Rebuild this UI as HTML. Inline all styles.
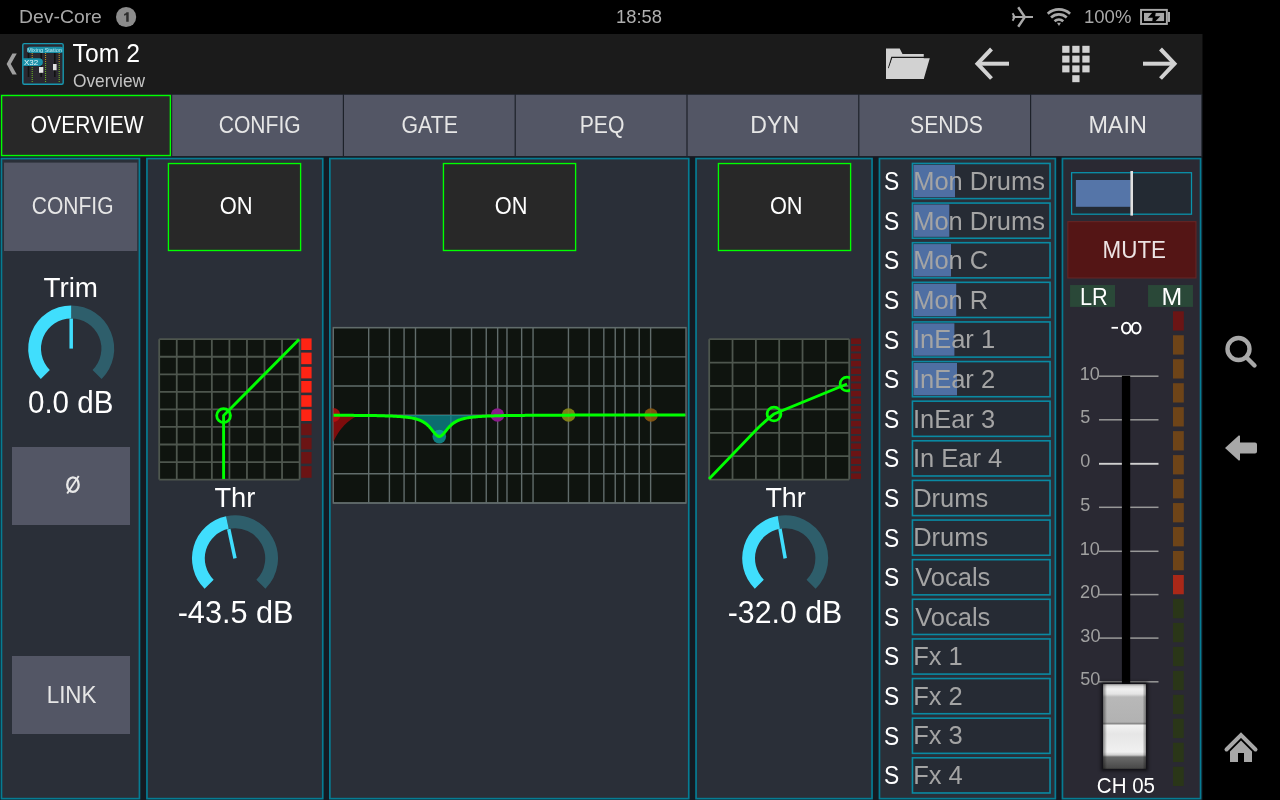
<!DOCTYPE html><html><head><meta charset="utf-8"><style>
html,body{margin:0;padding:0;background:#000;width:1280px;height:800px;overflow:hidden;font-family:"Liberation Sans",sans-serif;}
svg{position:absolute;left:0;top:0;}
</style></head><body>
<svg width="1280" height="800" viewBox="0 0 1280 800"><rect x="0.00" y="34.00" width="1202.50" height="60.00" fill="#1b1b1b" /><rect x="0.00" y="94.00" width="1202.50" height="63.00" fill="#1d2129" /><rect x="0.00" y="157.00" width="1202.50" height="643.00" fill="#141a22" /><circle cx="126.1" cy="17" r="10.1" fill="#8c8c8c"/><path fill="#2e2e2e" d="M126.2,12.3 L128.7,12.3 L128.7,21.8 L126.2,21.8 L126.2,15.0 L124.1,15.8 L124.1,14.1 L126.2,12.9 Z"/><rect x="1.60" y="95.50" width="168.77" height="60.04" fill="#282828" stroke="#00ff00" stroke-width="1.4" /><rect x="172.20" y="94.80" width="170.60" height="61.20" fill="#535665" /><rect x="344.00" y="94.80" width="170.60" height="61.20" fill="#535665" /><rect x="515.80" y="94.80" width="170.60" height="61.20" fill="#535665" /><rect x="687.60" y="94.80" width="170.60" height="61.20" fill="#535665" /><rect x="859.40" y="94.80" width="170.60" height="61.20" fill="#535665" /><rect x="1031.20" y="94.80" width="170.10" height="61.20" fill="#535665" /><rect x="1.45" y="158.55" width="138.00" height="640.10" fill="#2a2f38" stroke="#067c93" stroke-width="1.7" /><rect x="146.95" y="158.55" width="175.80" height="640.10" fill="#2a2f38" stroke="#067c93" stroke-width="1.7" /><rect x="329.85" y="158.55" width="358.90" height="640.10" fill="#2a2f38" stroke="#067c93" stroke-width="1.7" /><rect x="696.05" y="158.55" width="176.00" height="640.10" fill="#2a2f38" stroke="#067c93" stroke-width="1.7" /><rect x="879.45" y="158.55" width="175.90" height="640.10" fill="#2a2f38" stroke="#067c93" stroke-width="1.7" /><rect x="1062.45" y="158.55" width="138.10" height="640.10" fill="#2a2933" stroke="#067c93" stroke-width="1.7" /><rect x="4.00" y="162.60" width="133.20" height="88.40" fill="#535665" /><rect x="12.00" y="447.00" width="118.00" height="78.00" fill="#535665" /><ellipse cx="72.95" cy="484.65" rx="5.75" ry="7.3" fill="none" stroke="#e8e8e8" stroke-width="2.3"/><line x1="67.2" y1="493.6" x2="78.7" y2="476.1" stroke="#e8e8e8" stroke-width="1.9"/><rect x="12.00" y="656.00" width="118.00" height="78.00" fill="#535665" /><rect x="168.44" y="163.54" width="132.16" height="86.96" fill="#282828" stroke="#00ff00" stroke-width="1.36" /><rect x="443.44" y="163.54" width="132.16" height="86.96" fill="#282828" stroke="#00ff00" stroke-width="1.36" /><rect x="718.44" y="163.54" width="132.16" height="86.96" fill="#282828" stroke="#00ff00" stroke-width="1.36" /><path d="M71.20,312.00 A36.6,36.6 0 0 1 97.08,374.48" fill="none" stroke="#2e5e6b" stroke-width="12.8"/><path d="M45.32,374.48 A36.6,36.6 0 0 1 71.20,312.00" fill="none" stroke="#40defd" stroke-width="12.8"/><line x1="71.20" y1="348.60" x2="71.20" y2="318.60" stroke="#40defd" stroke-width="3.5"/><path d="M227.39,522.60 A36.6,36.6 0 0 1 260.88,584.28" fill="none" stroke="#2e5e6b" stroke-width="12.8"/><path d="M209.12,584.28 A36.6,36.6 0 0 1 227.39,522.60" fill="none" stroke="#40defd" stroke-width="12.8"/><line x1="235.00" y1="558.40" x2="228.76" y2="529.06" stroke="#40defd" stroke-width="3.5"/><path d="M778.84,522.36 A36.6,36.6 0 0 1 811.08,584.28" fill="none" stroke="#2e5e6b" stroke-width="12.8"/><path d="M759.32,584.28 A36.6,36.6 0 0 1 778.84,522.36" fill="none" stroke="#40defd" stroke-width="12.8"/><line x1="785.20" y1="558.40" x2="779.99" y2="528.86" stroke="#40defd" stroke-width="3.5"/><rect x="159.2" y="339.2" width="140.40000000000003" height="140.40000000000003" fill="#0f140f"/><line x1="159.20" y1="339.2" x2="159.20" y2="479.6" stroke="#4e564e" stroke-width="1.8"/><line x1="176.75" y1="339.2" x2="176.75" y2="479.6" stroke="#4e564e" stroke-width="1.8"/><line x1="194.30" y1="339.2" x2="194.30" y2="479.6" stroke="#4e564e" stroke-width="1.8"/><line x1="211.85" y1="339.2" x2="211.85" y2="479.6" stroke="#4e564e" stroke-width="1.8"/><line x1="229.40" y1="339.2" x2="229.40" y2="479.6" stroke="#4e564e" stroke-width="1.8"/><line x1="246.95" y1="339.2" x2="246.95" y2="479.6" stroke="#4e564e" stroke-width="1.8"/><line x1="264.50" y1="339.2" x2="264.50" y2="479.6" stroke="#4e564e" stroke-width="1.8"/><line x1="282.05" y1="339.2" x2="282.05" y2="479.6" stroke="#4e564e" stroke-width="1.8"/><line x1="299.60" y1="339.2" x2="299.60" y2="479.6" stroke="#4e564e" stroke-width="1.8"/><line x1="159.2" y1="339.20" x2="299.6" y2="339.20" stroke="#4e564e" stroke-width="1.8"/><line x1="159.2" y1="356.75" x2="299.6" y2="356.75" stroke="#4e564e" stroke-width="1.8"/><line x1="159.2" y1="374.30" x2="299.6" y2="374.30" stroke="#4e564e" stroke-width="1.8"/><line x1="159.2" y1="391.85" x2="299.6" y2="391.85" stroke="#4e564e" stroke-width="1.8"/><line x1="159.2" y1="409.40" x2="299.6" y2="409.40" stroke="#4e564e" stroke-width="1.8"/><line x1="159.2" y1="426.95" x2="299.6" y2="426.95" stroke="#4e564e" stroke-width="1.8"/><line x1="159.2" y1="444.50" x2="299.6" y2="444.50" stroke="#4e564e" stroke-width="1.8"/><line x1="159.2" y1="462.05" x2="299.6" y2="462.05" stroke="#4e564e" stroke-width="1.8"/><line x1="159.2" y1="479.60" x2="299.6" y2="479.60" stroke="#4e564e" stroke-width="1.8"/><path d="M223.6,479 L223.6,415.6 L299,339.5" fill="none" stroke="#00ff00" stroke-width="2.9"/><circle cx="223.6" cy="415.6" r="6.9" fill="none" stroke="#00ff00" stroke-width="2.8"/><rect x="301.2" y="338.40" width="10.4" height="11.6" fill="#ff2414"/><rect x="301.2" y="352.60" width="10.4" height="11.6" fill="#ff2414"/><rect x="301.2" y="366.80" width="10.4" height="11.6" fill="#ff2414"/><rect x="301.2" y="381.00" width="10.4" height="11.6" fill="#ff2414"/><rect x="301.2" y="395.20" width="10.4" height="11.6" fill="#ff2414"/><rect x="301.2" y="409.40" width="10.4" height="11.6" fill="#ff2414"/><rect x="301.2" y="423.60" width="10.4" height="11.6" fill="#6b1414"/><rect x="301.2" y="437.80" width="10.4" height="11.6" fill="#6b1414"/><rect x="301.2" y="452.00" width="10.4" height="11.6" fill="#6b1414"/><rect x="301.2" y="466.20" width="10.4" height="11.6" fill="#6b1414"/><rect x="709.2" y="339.2" width="140.0" height="140.40000000000003" fill="#0f140f"/><line x1="709.20" y1="339.2" x2="709.20" y2="479.6" stroke="#4e564e" stroke-width="1.8"/><line x1="732.53" y1="339.2" x2="732.53" y2="479.6" stroke="#4e564e" stroke-width="1.8"/><line x1="755.87" y1="339.2" x2="755.87" y2="479.6" stroke="#4e564e" stroke-width="1.8"/><line x1="779.20" y1="339.2" x2="779.20" y2="479.6" stroke="#4e564e" stroke-width="1.8"/><line x1="802.53" y1="339.2" x2="802.53" y2="479.6" stroke="#4e564e" stroke-width="1.8"/><line x1="825.87" y1="339.2" x2="825.87" y2="479.6" stroke="#4e564e" stroke-width="1.8"/><line x1="849.20" y1="339.2" x2="849.20" y2="479.6" stroke="#4e564e" stroke-width="1.8"/><line x1="709.2" y1="339.20" x2="849.2" y2="339.20" stroke="#4e564e" stroke-width="1.8"/><line x1="709.2" y1="362.60" x2="849.2" y2="362.60" stroke="#4e564e" stroke-width="1.8"/><line x1="709.2" y1="386.00" x2="849.2" y2="386.00" stroke="#4e564e" stroke-width="1.8"/><line x1="709.2" y1="409.40" x2="849.2" y2="409.40" stroke="#4e564e" stroke-width="1.8"/><line x1="709.2" y1="432.80" x2="849.2" y2="432.80" stroke="#4e564e" stroke-width="1.8"/><line x1="709.2" y1="456.20" x2="849.2" y2="456.20" stroke="#4e564e" stroke-width="1.8"/><line x1="709.2" y1="479.60" x2="849.2" y2="479.60" stroke="#4e564e" stroke-width="1.8"/><defs><clipPath id="dc"><rect x="708" y="338" width="142" height="142"/></clipPath></defs><g clip-path="url(#dc)"><path d="M709,479 L757,429 Q765,421 774,414 L847,384" fill="none" stroke="#00ff00" stroke-width="2.9"/><circle cx="774" cy="414" r="6.9" fill="none" stroke="#00ff00" stroke-width="2.8"/><circle cx="847" cy="384" r="6.9" fill="none" stroke="#00ff00" stroke-width="2.8"/></g><rect x="851" y="338.40" width="10" height="5.6" fill="#6b1414"/><rect x="851" y="345.90" width="10" height="5.6" fill="#6b1414"/><rect x="851" y="353.40" width="10" height="5.6" fill="#6b1414"/><rect x="851" y="360.90" width="10" height="5.6" fill="#6b1414"/><rect x="851" y="368.40" width="10" height="5.6" fill="#6b1414"/><rect x="851" y="375.90" width="10" height="5.6" fill="#6b1414"/><rect x="851" y="383.40" width="10" height="5.6" fill="#6b1414"/><rect x="851" y="390.90" width="10" height="5.6" fill="#6b1414"/><rect x="851" y="398.40" width="10" height="5.6" fill="#6b1414"/><rect x="851" y="405.90" width="10" height="5.6" fill="#6b1414"/><rect x="851" y="413.40" width="10" height="5.6" fill="#6b1414"/><rect x="851" y="420.90" width="10" height="5.6" fill="#6b1414"/><rect x="851" y="428.40" width="10" height="5.6" fill="#6b1414"/><rect x="851" y="435.90" width="10" height="5.6" fill="#6b1414"/><rect x="851" y="443.40" width="10" height="5.6" fill="#6b1414"/><rect x="851" y="450.90" width="10" height="5.6" fill="#6b1414"/><rect x="851" y="458.40" width="10" height="5.6" fill="#6b1414"/><rect x="851" y="465.90" width="10" height="5.6" fill="#6b1414"/><rect x="851" y="473.40" width="10" height="5.6" fill="#6b1414"/><rect x="333.3" y="327.6" width="352.7" height="175.39999999999998" fill="#0f140f"/><defs><clipPath id="pc"><rect x="333.3" y="327.6" width="352.7" height="175.4"/></clipPath></defs><line x1="368.69" y1="327.6" x2="368.69" y2="503" stroke="#616c6b" stroke-width="1.4"/><line x1="389.40" y1="327.6" x2="389.40" y2="503" stroke="#616c6b" stroke-width="1.4"/><line x1="404.08" y1="327.6" x2="404.08" y2="503" stroke="#616c6b" stroke-width="1.4"/><line x1="415.48" y1="327.6" x2="415.48" y2="503" stroke="#616c6b" stroke-width="1.4"/><line x1="450.87" y1="327.6" x2="450.87" y2="503" stroke="#616c6b" stroke-width="1.4"/><line x1="471.57" y1="327.6" x2="471.57" y2="503" stroke="#616c6b" stroke-width="1.4"/><line x1="486.26" y1="327.6" x2="486.26" y2="503" stroke="#616c6b" stroke-width="1.4"/><line x1="497.66" y1="327.6" x2="497.66" y2="503" stroke="#616c6b" stroke-width="1.4"/><line x1="506.97" y1="327.6" x2="506.97" y2="503" stroke="#616c6b" stroke-width="1.4"/><line x1="521.65" y1="327.6" x2="521.65" y2="503" stroke="#616c6b" stroke-width="1.4"/><line x1="533.05" y1="327.6" x2="533.05" y2="503" stroke="#616c6b" stroke-width="1.4"/><line x1="568.44" y1="327.6" x2="568.44" y2="503" stroke="#616c6b" stroke-width="1.4"/><line x1="589.14" y1="327.6" x2="589.14" y2="503" stroke="#616c6b" stroke-width="1.4"/><line x1="603.83" y1="327.6" x2="603.83" y2="503" stroke="#616c6b" stroke-width="1.4"/><line x1="615.23" y1="327.6" x2="615.23" y2="503" stroke="#616c6b" stroke-width="1.4"/><line x1="624.54" y1="327.6" x2="624.54" y2="503" stroke="#616c6b" stroke-width="1.4"/><line x1="639.22" y1="327.6" x2="639.22" y2="503" stroke="#616c6b" stroke-width="1.4"/><line x1="650.62" y1="327.6" x2="650.62" y2="503" stroke="#616c6b" stroke-width="1.4"/><line x1="333.3" y1="327.60" x2="686" y2="327.60" stroke="#616c6b" stroke-width="1.4"/><line x1="333.3" y1="356.83" x2="686" y2="356.83" stroke="#616c6b" stroke-width="1.4"/><line x1="333.3" y1="386.07" x2="686" y2="386.07" stroke="#616c6b" stroke-width="1.4"/><line x1="333.3" y1="415.30" x2="686" y2="415.30" stroke="#616c6b" stroke-width="1.4"/><line x1="333.3" y1="444.53" x2="686" y2="444.53" stroke="#616c6b" stroke-width="1.4"/><line x1="333.3" y1="473.77" x2="686" y2="473.77" stroke="#616c6b" stroke-width="1.4"/><line x1="333.3" y1="503.00" x2="686" y2="503.00" stroke="#616c6b" stroke-width="1.4"/><rect x="333.3" y="327.6" width="352.7" height="175.39999999999998" fill="none" stroke="#616c6b" stroke-width="1.4"/><g clip-path="url(#pc)"><path d="M333.3,415.0 L333.3,415.2 L334.3,415.2 L335.3,415.2 L336.3,415.2 L337.3,415.2 L338.3,415.3 L339.3,415.3 L340.3,415.3 L341.3,415.3 L342.3,415.3 L343.3,415.3 L344.3,415.3 L345.3,415.3 L346.3,415.3 L347.3,415.3 L348.3,415.3 L349.3,415.3 L350.3,415.3 L351.3,415.3 L352.3,415.3 L353.3,415.3 L354.3,415.4 L355.3,415.4 L356.3,415.4 L357.3,415.4 L358.3,415.4 L359.3,415.4 L360.3,415.4 L361.3,415.4 L362.3,415.4 L363.3,415.4 L364.3,415.5 L365.3,415.5 L366.3,415.5 L367.3,415.5 L368.3,415.5 L369.3,415.5 L370.3,415.5 L371.3,415.6 L372.3,415.6 L373.3,415.6 L374.3,415.6 L375.3,415.6 L376.3,415.6 L377.3,415.7 L378.3,415.7 L379.3,415.7 L380.3,415.7 L381.3,415.8 L382.3,415.8 L383.3,415.8 L384.3,415.8 L385.3,415.9 L386.3,415.9 L387.3,415.9 L388.3,416.0 L389.3,416.0 L390.3,416.0 L391.3,416.1 L392.3,416.1 L393.3,416.2 L394.3,416.2 L395.3,416.3 L396.3,416.3 L397.3,416.4 L398.3,416.5 L399.3,416.5 L400.3,416.6 L401.3,416.7 L402.3,416.8 L403.3,416.9 L404.3,417.0 L405.3,417.1 L406.3,417.2 L407.3,417.3 L408.3,417.4 L409.3,417.6 L410.3,417.7 L411.3,417.9 L412.3,418.1 L413.3,418.3 L414.3,418.5 L415.3,418.8 L416.3,419.0 L417.3,419.3 L418.3,419.7 L419.3,420.0 L420.3,420.4 L421.3,420.9 L422.3,421.4 L423.3,422.0 L424.3,422.6 L425.3,423.3 L426.3,424.0 L427.3,424.9 L428.3,425.8 L429.3,426.8 L430.3,427.9 L431.3,429.1 L432.3,430.4 L433.3,431.6 L434.3,432.9 L435.3,434.0 L436.3,435.0 L437.3,435.8 L438.3,436.3 L439.3,436.5 L440.3,436.3 L441.3,435.8 L442.3,435.0 L443.3,434.0 L444.3,432.9 L445.3,431.6 L446.3,430.4 L447.3,429.1 L448.3,427.9 L449.3,426.8 L450.3,425.8 L451.3,424.9 L452.3,424.0 L453.3,423.3 L454.3,422.6 L455.3,422.0 L456.3,421.4 L457.3,420.9 L458.3,420.4 L459.3,420.0 L460.3,419.7 L461.3,419.3 L462.3,419.0 L463.3,418.8 L464.3,418.5 L465.3,418.3 L466.3,418.1 L467.3,417.9 L468.3,417.7 L469.3,417.6 L470.3,417.4 L471.3,417.3 L472.3,417.2 L473.3,417.1 L474.3,417.0 L475.3,416.9 L476.3,416.8 L477.3,416.7 L478.3,416.6 L479.3,416.5 L480.3,416.5 L481.3,416.4 L482.3,416.3 L483.3,416.3 L484.3,416.2 L485.3,416.2 L486.3,416.1 L487.3,416.1 L488.3,416.0 L489.3,416.0 L490.3,416.0 L491.3,415.9 L492.3,415.9 L493.3,415.9 L494.3,415.8 L495.3,415.8 L496.3,415.8 L497.3,415.8 L498.3,415.7 L499.3,415.7 L500.3,415.7 L501.3,415.7 L502.3,415.6 L503.3,415.6 L504.3,415.6 L505.3,415.6 L506.3,415.6 L507.3,415.6 L508.3,415.5 L509.3,415.5 L510.3,415.5 L511.3,415.5 L512.3,415.5 L513.3,415.5 L514.3,415.5 L515.3,415.4 L516.3,415.4 L517.3,415.4 L518.3,415.4 L519.3,415.4 L520.3,415.4 L521.3,415.4 L522.3,415.4 L523.3,415.4 L524.3,415.4 L525.3,415.3 L526.3,415.3 L527.3,415.3 L528.3,415.3 L529.3,415.3 L530.3,415.3 L531.3,415.3 L532.3,415.3 L533.3,415.3 L534.3,415.3 L535.3,415.3 L536.3,415.3 L537.3,415.3 L538.3,415.3 L539.3,415.3 L540.3,415.3 L541.3,415.2 L542.3,415.2 L543.3,415.2 L544.3,415.2 L545.3,415.2 L546.3,415.2 L547.3,415.2 L548.3,415.2 L549.3,415.2 L550.3,415.2 L551.3,415.2 L552.3,415.2 L553.3,415.2 L554.3,415.2 L555.3,415.2 L556.3,415.2 L557.3,415.2 L558.3,415.2 L559.3,415.2 L560.3,415.2 L561.3,415.2 L562.3,415.2 L563.3,415.2 L564.3,415.2 L565.3,415.2 L566.3,415.2 L567.3,415.2 L568.3,415.2 L569.3,415.2 L570.3,415.2 L571.3,415.1 L572.3,415.1 L573.3,415.1 L574.3,415.1 L575.3,415.1 L576.3,415.1 L577.3,415.1 L578.3,415.1 L579.3,415.1 L580.3,415.1 L581.3,415.1 L582.3,415.1 L583.3,415.1 L584.3,415.1 L585.3,415.1 L586.3,415.1 L587.3,415.1 L588.3,415.1 L589.3,415.1 L590.3,415.1 L591.3,415.1 L592.3,415.1 L593.3,415.1 L594.3,415.1 L595.3,415.1 L596.3,415.1 L597.3,415.1 L598.3,415.1 L599.3,415.1 L600.3,415.1 L601.3,415.1 L602.3,415.1 L603.3,415.1 L604.3,415.1 L605.3,415.1 L606.3,415.1 L607.3,415.1 L608.3,415.1 L609.3,415.1 L610.3,415.1 L611.3,415.1 L612.3,415.1 L613.3,415.1 L614.3,415.1 L615.3,415.1 L616.3,415.1 L617.3,415.1 L618.3,415.1 L619.3,415.1 L620.3,415.1 L621.3,415.1 L622.3,415.1 L623.3,415.1 L624.3,415.1 L625.3,415.1 L626.3,415.1 L627.3,415.1 L628.3,415.1 L629.3,415.1 L630.3,415.1 L631.3,415.1 L632.3,415.1 L633.3,415.1 L634.3,415.1 L635.3,415.1 L636.3,415.1 L637.3,415.1 L638.3,415.1 L639.3,415.1 L640.3,415.1 L641.3,415.1 L642.3,415.1 L643.3,415.1 L644.3,415.1 L645.3,415.1 L646.3,415.1 L647.3,415.1 L648.3,415.1 L649.3,415.1 L650.3,415.1 L651.3,415.1 L652.3,415.1 L653.3,415.1 L654.3,415.1 L655.3,415.1 L656.3,415.1 L657.3,415.1 L658.3,415.1 L659.3,415.1 L660.3,415.1 L661.3,415.1 L662.3,415.1 L663.3,415.1 L664.3,415.1 L665.3,415.1 L666.3,415.1 L667.3,415.1 L668.3,415.1 L669.3,415.0 L670.3,415.0 L671.3,415.0 L672.3,415.0 L673.3,415.0 L674.3,415.0 L675.3,415.0 L676.3,415.0 L677.3,415.0 L678.3,415.0 L679.3,415.0 L680.3,415.0 L681.3,415.0 L682.3,415.0 L683.3,415.0 L684.3,415.0 L685.3,415.0 L686,415.0 Z" fill="#0b8a90" fill-opacity="0.75"/><path d="M333.3,415.0 L359.3,415.0 Q342.3,422.0 333.3,442.0 Z" fill="#7e0c0c"/><circle cx="333.3" cy="415.0" r="7" fill="#c01010" fill-opacity="0.8"/><circle cx="439.3" cy="436.6" r="6.8" fill="#0faab0" fill-opacity="0.7"/><circle cx="497.5" cy="415.0" r="6.8" fill="#8a1a8a"/><circle cx="568.5" cy="415.0" r="6.8" fill="#8a8a18" fill-opacity="0.9"/><circle cx="651" cy="415.0" r="6.8" fill="#8a5a12" fill-opacity="0.9"/><path d="M333.3,415.2 L334.3,415.2 L335.3,415.2 L336.3,415.2 L337.3,415.2 L338.3,415.3 L339.3,415.3 L340.3,415.3 L341.3,415.3 L342.3,415.3 L343.3,415.3 L344.3,415.3 L345.3,415.3 L346.3,415.3 L347.3,415.3 L348.3,415.3 L349.3,415.3 L350.3,415.3 L351.3,415.3 L352.3,415.3 L353.3,415.3 L354.3,415.4 L355.3,415.4 L356.3,415.4 L357.3,415.4 L358.3,415.4 L359.3,415.4 L360.3,415.4 L361.3,415.4 L362.3,415.4 L363.3,415.4 L364.3,415.5 L365.3,415.5 L366.3,415.5 L367.3,415.5 L368.3,415.5 L369.3,415.5 L370.3,415.5 L371.3,415.6 L372.3,415.6 L373.3,415.6 L374.3,415.6 L375.3,415.6 L376.3,415.6 L377.3,415.7 L378.3,415.7 L379.3,415.7 L380.3,415.7 L381.3,415.8 L382.3,415.8 L383.3,415.8 L384.3,415.8 L385.3,415.9 L386.3,415.9 L387.3,415.9 L388.3,416.0 L389.3,416.0 L390.3,416.0 L391.3,416.1 L392.3,416.1 L393.3,416.2 L394.3,416.2 L395.3,416.3 L396.3,416.3 L397.3,416.4 L398.3,416.5 L399.3,416.5 L400.3,416.6 L401.3,416.7 L402.3,416.8 L403.3,416.9 L404.3,417.0 L405.3,417.1 L406.3,417.2 L407.3,417.3 L408.3,417.4 L409.3,417.6 L410.3,417.7 L411.3,417.9 L412.3,418.1 L413.3,418.3 L414.3,418.5 L415.3,418.8 L416.3,419.0 L417.3,419.3 L418.3,419.7 L419.3,420.0 L420.3,420.4 L421.3,420.9 L422.3,421.4 L423.3,422.0 L424.3,422.6 L425.3,423.3 L426.3,424.0 L427.3,424.9 L428.3,425.8 L429.3,426.8 L430.3,427.9 L431.3,429.1 L432.3,430.4 L433.3,431.6 L434.3,432.9 L435.3,434.0 L436.3,435.0 L437.3,435.8 L438.3,436.3 L439.3,436.5 L440.3,436.3 L441.3,435.8 L442.3,435.0 L443.3,434.0 L444.3,432.9 L445.3,431.6 L446.3,430.4 L447.3,429.1 L448.3,427.9 L449.3,426.8 L450.3,425.8 L451.3,424.9 L452.3,424.0 L453.3,423.3 L454.3,422.6 L455.3,422.0 L456.3,421.4 L457.3,420.9 L458.3,420.4 L459.3,420.0 L460.3,419.7 L461.3,419.3 L462.3,419.0 L463.3,418.8 L464.3,418.5 L465.3,418.3 L466.3,418.1 L467.3,417.9 L468.3,417.7 L469.3,417.6 L470.3,417.4 L471.3,417.3 L472.3,417.2 L473.3,417.1 L474.3,417.0 L475.3,416.9 L476.3,416.8 L477.3,416.7 L478.3,416.6 L479.3,416.5 L480.3,416.5 L481.3,416.4 L482.3,416.3 L483.3,416.3 L484.3,416.2 L485.3,416.2 L486.3,416.1 L487.3,416.1 L488.3,416.0 L489.3,416.0 L490.3,416.0 L491.3,415.9 L492.3,415.9 L493.3,415.9 L494.3,415.8 L495.3,415.8 L496.3,415.8 L497.3,415.8 L498.3,415.7 L499.3,415.7 L500.3,415.7 L501.3,415.7 L502.3,415.6 L503.3,415.6 L504.3,415.6 L505.3,415.6 L506.3,415.6 L507.3,415.6 L508.3,415.5 L509.3,415.5 L510.3,415.5 L511.3,415.5 L512.3,415.5 L513.3,415.5 L514.3,415.5 L515.3,415.4 L516.3,415.4 L517.3,415.4 L518.3,415.4 L519.3,415.4 L520.3,415.4 L521.3,415.4 L522.3,415.4 L523.3,415.4 L524.3,415.4 L525.3,415.3 L526.3,415.3 L527.3,415.3 L528.3,415.3 L529.3,415.3 L530.3,415.3 L531.3,415.3 L532.3,415.3 L533.3,415.3 L534.3,415.3 L535.3,415.3 L536.3,415.3 L537.3,415.3 L538.3,415.3 L539.3,415.3 L540.3,415.3 L541.3,415.2 L542.3,415.2 L543.3,415.2 L544.3,415.2 L545.3,415.2 L546.3,415.2 L547.3,415.2 L548.3,415.2 L549.3,415.2 L550.3,415.2 L551.3,415.2 L552.3,415.2 L553.3,415.2 L554.3,415.2 L555.3,415.2 L556.3,415.2 L557.3,415.2 L558.3,415.2 L559.3,415.2 L560.3,415.2 L561.3,415.2 L562.3,415.2 L563.3,415.2 L564.3,415.2 L565.3,415.2 L566.3,415.2 L567.3,415.2 L568.3,415.2 L569.3,415.2 L570.3,415.2 L571.3,415.1 L572.3,415.1 L573.3,415.1 L574.3,415.1 L575.3,415.1 L576.3,415.1 L577.3,415.1 L578.3,415.1 L579.3,415.1 L580.3,415.1 L581.3,415.1 L582.3,415.1 L583.3,415.1 L584.3,415.1 L585.3,415.1 L586.3,415.1 L587.3,415.1 L588.3,415.1 L589.3,415.1 L590.3,415.1 L591.3,415.1 L592.3,415.1 L593.3,415.1 L594.3,415.1 L595.3,415.1 L596.3,415.1 L597.3,415.1 L598.3,415.1 L599.3,415.1 L600.3,415.1 L601.3,415.1 L602.3,415.1 L603.3,415.1 L604.3,415.1 L605.3,415.1 L606.3,415.1 L607.3,415.1 L608.3,415.1 L609.3,415.1 L610.3,415.1 L611.3,415.1 L612.3,415.1 L613.3,415.1 L614.3,415.1 L615.3,415.1 L616.3,415.1 L617.3,415.1 L618.3,415.1 L619.3,415.1 L620.3,415.1 L621.3,415.1 L622.3,415.1 L623.3,415.1 L624.3,415.1 L625.3,415.1 L626.3,415.1 L627.3,415.1 L628.3,415.1 L629.3,415.1 L630.3,415.1 L631.3,415.1 L632.3,415.1 L633.3,415.1 L634.3,415.1 L635.3,415.1 L636.3,415.1 L637.3,415.1 L638.3,415.1 L639.3,415.1 L640.3,415.1 L641.3,415.1 L642.3,415.1 L643.3,415.1 L644.3,415.1 L645.3,415.1 L646.3,415.1 L647.3,415.1 L648.3,415.1 L649.3,415.1 L650.3,415.1 L651.3,415.1 L652.3,415.1 L653.3,415.1 L654.3,415.1 L655.3,415.1 L656.3,415.1 L657.3,415.1 L658.3,415.1 L659.3,415.1 L660.3,415.1 L661.3,415.1 L662.3,415.1 L663.3,415.1 L664.3,415.1 L665.3,415.1 L666.3,415.1 L667.3,415.1 L668.3,415.1 L669.3,415.0 L670.3,415.0 L671.3,415.0 L672.3,415.0 L673.3,415.0 L674.3,415.0 L675.3,415.0 L676.3,415.0 L677.3,415.0 L678.3,415.0 L679.3,415.0 L680.3,415.0 L681.3,415.0 L682.3,415.0 L683.3,415.0 L684.3,415.0 L685.3,415.0" fill="none" stroke="#00ff00" stroke-width="3"/></g><rect x="912.45" y="163.44" width="137.59" height="35.17" fill="#262b34" stroke="#0a8aa3" stroke-width="1.6" /><rect x="913.50" y="164.84" width="41.50" height="32.37" fill="#4f6fa3" /><rect x="912.45" y="203.06" width="137.59" height="35.17" fill="#262b34" stroke="#0a8aa3" stroke-width="1.6" /><rect x="913.50" y="204.46" width="35.80" height="32.37" fill="#4f6fa3" /><rect x="912.45" y="242.69" width="137.59" height="35.17" fill="#262b34" stroke="#0a8aa3" stroke-width="1.6" /><rect x="913.50" y="244.09" width="37.50" height="32.37" fill="#4f6fa3" /><rect x="912.45" y="282.31" width="137.59" height="35.17" fill="#262b34" stroke="#0a8aa3" stroke-width="1.6" /><rect x="913.50" y="283.71" width="42.70" height="32.37" fill="#4f6fa3" /><rect x="912.45" y="321.94" width="137.59" height="35.17" fill="#262b34" stroke="#0a8aa3" stroke-width="1.6" /><rect x="913.50" y="323.34" width="40.90" height="32.37" fill="#4f6fa3" /><rect x="912.45" y="361.56" width="137.59" height="35.17" fill="#262b34" stroke="#0a8aa3" stroke-width="1.6" /><rect x="913.50" y="362.96" width="43.50" height="32.37" fill="#4f6fa3" /><rect x="912.45" y="401.18" width="137.59" height="35.17" fill="#262b34" stroke="#0a8aa3" stroke-width="1.6" /><rect x="912.45" y="440.81" width="137.59" height="35.17" fill="#262b34" stroke="#0a8aa3" stroke-width="1.6" /><rect x="912.45" y="480.43" width="137.59" height="35.17" fill="#262b34" stroke="#0a8aa3" stroke-width="1.6" /><rect x="912.45" y="520.06" width="137.59" height="35.17" fill="#262b34" stroke="#0a8aa3" stroke-width="1.6" /><rect x="912.45" y="559.68" width="137.59" height="35.17" fill="#262b34" stroke="#0a8aa3" stroke-width="1.6" /><rect x="912.45" y="599.30" width="137.59" height="35.17" fill="#262b34" stroke="#0a8aa3" stroke-width="1.6" /><rect x="912.45" y="638.93" width="137.59" height="35.17" fill="#262b34" stroke="#0a8aa3" stroke-width="1.6" /><rect x="912.45" y="678.55" width="137.59" height="35.17" fill="#262b34" stroke="#0a8aa3" stroke-width="1.6" /><rect x="912.45" y="718.18" width="137.59" height="35.17" fill="#262b34" stroke="#0a8aa3" stroke-width="1.6" /><rect x="912.45" y="757.80" width="137.59" height="35.17" fill="#262b34" stroke="#0a8aa3" stroke-width="1.6" /><rect x="1071.60" y="172.70" width="119.90" height="41.50" fill="#232a33" stroke="#0a94ad" stroke-width="1.26" /><rect x="1075.90" y="180.00" width="54.60" height="26.80" fill="#5575a8" /><rect x="1130.40" y="171.00" width="2.60" height="44.60" fill="#e0e0e0" /><rect x="1067.85" y="221.65" width="128.10" height="56.30" fill="#541515" stroke="#652525" stroke-width="1.1" /><rect x="1070.06" y="285.05" width="44.99" height="21.85" fill="#2a4838" /><rect x="1148.06" y="285.05" width="44.89" height="21.85" fill="#2a4838" /><rect x="1111.5" y="326.9" width="6.5" height="1.8" fill="#ffffff"/><ellipse cx="1126.3" cy="328.1" rx="4.3" ry="5.4" fill="none" stroke="#fff" stroke-width="2.1"/><ellipse cx="1136.2" cy="328.1" rx="4.3" ry="5.4" fill="none" stroke="#fff" stroke-width="2.1"/><rect x="1099.00" y="375.45" width="59.50" height="1.50" fill="#989898" /><rect x="1099.00" y="419.05" width="59.50" height="1.50" fill="#989898" /><rect x="1099.00" y="462.85" width="59.50" height="1.90" fill="#d0d0d0" /><rect x="1099.00" y="506.55" width="59.50" height="1.50" fill="#989898" /><rect x="1099.00" y="550.55" width="59.50" height="1.50" fill="#989898" /><rect x="1099.00" y="593.85" width="59.50" height="1.50" fill="#989898" /><rect x="1099.00" y="637.35" width="59.50" height="1.50" fill="#989898" /><rect x="1099.00" y="681.05" width="59.50" height="1.50" fill="#989898" /><rect x="1121.90" y="375.80" width="8.30" height="314.20" fill="#000" /><rect x="1173.00" y="311.30" width="10.80" height="19.30" fill="#6b1515" /><rect x="1173.00" y="335.27" width="10.80" height="19.30" fill="#6e4418" /><rect x="1173.00" y="359.24" width="10.80" height="19.30" fill="#6e4418" /><rect x="1173.00" y="383.21" width="10.80" height="19.30" fill="#6e4418" /><rect x="1173.00" y="407.18" width="10.80" height="19.30" fill="#6e4418" /><rect x="1173.00" y="431.15" width="10.80" height="19.30" fill="#6e4418" /><rect x="1173.00" y="455.12" width="10.80" height="19.30" fill="#6e4418" /><rect x="1173.00" y="479.09" width="10.80" height="19.30" fill="#6e4418" /><rect x="1173.00" y="503.06" width="10.80" height="19.30" fill="#6e4418" /><rect x="1173.00" y="527.03" width="10.80" height="19.30" fill="#6e4418" /><rect x="1173.00" y="551.00" width="10.80" height="19.30" fill="#6e4418" /><rect x="1173.00" y="574.97" width="10.80" height="19.30" fill="#aa2818" /><rect x="1173.00" y="598.94" width="10.80" height="19.30" fill="#2a3618" /><rect x="1173.00" y="622.91" width="10.80" height="19.30" fill="#2a3618" /><rect x="1173.00" y="646.88" width="10.80" height="19.30" fill="#2a3618" /><rect x="1173.00" y="670.85" width="10.80" height="19.30" fill="#2a3618" /><rect x="1173.00" y="694.82" width="10.80" height="19.30" fill="#2a3618" /><rect x="1173.00" y="718.79" width="10.80" height="19.30" fill="#2a3618" /><rect x="1173.00" y="742.76" width="10.80" height="19.30" fill="#2a3618" /><rect x="1173.00" y="766.73" width="10.80" height="19.30" fill="#2a3618" /></svg>
<div style="position:absolute;left:0;top:0;width:1280px;height:800px;will-change:transform;"><svg width="1280" height="800" viewBox="0 0 1280 800" font-family="Liberation Sans, sans-serif"><text x="19.10" y="22.90" font-size="18.26" textLength="82.79" lengthAdjust="spacingAndGlyphs" fill="#a8a8a8">Dev-Core</text>
<text x="616.12" y="23.00" font-size="18.99" textLength="45.88" lengthAdjust="spacingAndGlyphs" fill="#b0b0b0">18:58</text>
<text x="1084.01" y="22.80" font-size="18.41" textLength="47.42" lengthAdjust="spacingAndGlyphs" fill="#a8a8a8">100%</text>
<text x="72.58" y="62.10" font-size="24.93" textLength="67.37" lengthAdjust="spacingAndGlyphs" fill="#ffffff">Tom 2</text>
<text x="72.92" y="86.80" font-size="18.41" textLength="72.23" lengthAdjust="spacingAndGlyphs" fill="#c4c4c4">Overview</text>
<text x="30.85" y="133.00" font-size="24.49" textLength="112.82" lengthAdjust="spacingAndGlyphs" fill="#ffffff">OVERVIEW</text>
<text x="218.75" y="133.00" font-size="24.49" textLength="81.89" lengthAdjust="spacingAndGlyphs" fill="#e6e6e6">CONFIG</text>
<text x="401.54" y="133.00" font-size="24.49" textLength="56.36" lengthAdjust="spacingAndGlyphs" fill="#e6e6e6">GATE</text>
<text x="579.71" y="133.00" font-size="24.49" textLength="44.71" lengthAdjust="spacingAndGlyphs" fill="#e6e6e6">PEQ</text>
<text x="750.35" y="133.00" font-size="24.49" textLength="48.73" lengthAdjust="spacingAndGlyphs" fill="#e6e6e6">DYN</text>
<text x="910.05" y="133.00" font-size="24.49" textLength="72.94" lengthAdjust="spacingAndGlyphs" fill="#e6e6e6">SENDS</text>
<text x="1088.43" y="133.00" font-size="24.49" textLength="58.37" lengthAdjust="spacingAndGlyphs" fill="#e6e6e6">MAIN</text>
<text x="31.85" y="213.80" font-size="23.91" textLength="81.68" lengthAdjust="spacingAndGlyphs" fill="#e6e6e6">CONFIG</text>
<text x="43.44" y="297.00" font-size="28.26" textLength="54.56" lengthAdjust="spacingAndGlyphs" fill="#fff">Trim</text>
<text x="27.97" y="412.80" font-size="30.58" textLength="85.37" lengthAdjust="spacingAndGlyphs" fill="#fff">0.0 dB</text>
<text x="46.71" y="703.00" font-size="24.20" textLength="49.69" lengthAdjust="spacingAndGlyphs" fill="#e6e6e6">LINK</text>
<text x="219.76" y="213.90" font-size="24.06" textLength="32.88" lengthAdjust="spacingAndGlyphs" fill="#fff">ON</text>
<text x="494.82" y="213.90" font-size="24.06" textLength="32.66" lengthAdjust="spacingAndGlyphs" fill="#fff">ON</text>
<text x="769.92" y="213.90" font-size="24.06" textLength="32.66" lengthAdjust="spacingAndGlyphs" fill="#fff">ON</text>
<text x="214.45" y="507.10" font-size="28.55" textLength="40.90" lengthAdjust="spacingAndGlyphs" fill="#fff">Thr</text>
<text x="177.67" y="623.00" font-size="31.59" textLength="115.82" lengthAdjust="spacingAndGlyphs" fill="#fff">-43.5 dB</text>
<text x="765.46" y="507.20" font-size="28.41" textLength="40.29" lengthAdjust="spacingAndGlyphs" fill="#fff">Thr</text>
<text x="727.79" y="623.00" font-size="31.59" textLength="114.38" lengthAdjust="spacingAndGlyphs" fill="#fff">-32.0 dB</text>
<text x="884.02" y="190.10" font-size="25.80" textLength="15.24" lengthAdjust="spacingAndGlyphs" fill="#fff">S</text>
<text x="913.16" y="189.90" font-size="25.94" textLength="131.73" lengthAdjust="spacingAndGlyphs" fill="#a4a4a4">Mon Drums</text>
<text x="884.02" y="229.70" font-size="25.80" textLength="15.24" lengthAdjust="spacingAndGlyphs" fill="#fff">S</text>
<text x="913.16" y="229.50" font-size="25.94" textLength="131.73" lengthAdjust="spacingAndGlyphs" fill="#a4a4a4">Mon Drums</text>
<text x="884.02" y="269.30" font-size="25.80" textLength="15.24" lengthAdjust="spacingAndGlyphs" fill="#fff">S</text>
<text x="913.16" y="269.10" font-size="25.94" textLength="75.08" lengthAdjust="spacingAndGlyphs" fill="#a4a4a4">Mon C</text>
<text x="884.02" y="308.90" font-size="25.80" textLength="15.24" lengthAdjust="spacingAndGlyphs" fill="#fff">S</text>
<text x="913.16" y="308.70" font-size="25.94" textLength="75.08" lengthAdjust="spacingAndGlyphs" fill="#a4a4a4">Mon R</text>
<text x="884.02" y="348.50" font-size="25.80" textLength="15.24" lengthAdjust="spacingAndGlyphs" fill="#fff">S</text>
<text x="912.91" y="348.30" font-size="25.94" textLength="82.19" lengthAdjust="spacingAndGlyphs" fill="#a4a4a4">InEar 1</text>
<text x="884.02" y="388.10" font-size="25.80" textLength="15.24" lengthAdjust="spacingAndGlyphs" fill="#fff">S</text>
<text x="912.91" y="387.90" font-size="25.94" textLength="82.19" lengthAdjust="spacingAndGlyphs" fill="#a4a4a4">InEar 2</text>
<text x="884.02" y="427.70" font-size="25.80" textLength="15.24" lengthAdjust="spacingAndGlyphs" fill="#fff">S</text>
<text x="912.91" y="427.50" font-size="25.94" textLength="82.19" lengthAdjust="spacingAndGlyphs" fill="#a4a4a4">InEar 3</text>
<text x="884.02" y="467.30" font-size="25.80" textLength="15.24" lengthAdjust="spacingAndGlyphs" fill="#fff">S</text>
<text x="912.91" y="467.10" font-size="25.94" textLength="89.27" lengthAdjust="spacingAndGlyphs" fill="#a4a4a4">In Ear 4</text>
<text x="884.02" y="506.90" font-size="25.80" textLength="15.24" lengthAdjust="spacingAndGlyphs" fill="#fff">S</text>
<text x="913.16" y="506.70" font-size="25.94" textLength="75.06" lengthAdjust="spacingAndGlyphs" fill="#a4a4a4">Drums</text>
<text x="884.02" y="546.50" font-size="25.80" textLength="15.24" lengthAdjust="spacingAndGlyphs" fill="#fff">S</text>
<text x="913.16" y="546.30" font-size="25.94" textLength="75.06" lengthAdjust="spacingAndGlyphs" fill="#a4a4a4">Drums</text>
<text x="884.02" y="586.10" font-size="25.80" textLength="15.24" lengthAdjust="spacingAndGlyphs" fill="#fff">S</text>
<text x="915.20" y="585.90" font-size="25.94" textLength="75.11" lengthAdjust="spacingAndGlyphs" fill="#a4a4a4">Vocals</text>
<text x="884.02" y="625.70" font-size="25.80" textLength="15.24" lengthAdjust="spacingAndGlyphs" fill="#fff">S</text>
<text x="915.20" y="625.50" font-size="25.94" textLength="75.11" lengthAdjust="spacingAndGlyphs" fill="#a4a4a4">Vocals</text>
<text x="884.02" y="665.30" font-size="25.80" textLength="15.24" lengthAdjust="spacingAndGlyphs" fill="#fff">S</text>
<text x="913.16" y="665.10" font-size="25.94" textLength="49.58" lengthAdjust="spacingAndGlyphs" fill="#a4a4a4">Fx 1</text>
<text x="884.02" y="704.90" font-size="25.80" textLength="15.24" lengthAdjust="spacingAndGlyphs" fill="#fff">S</text>
<text x="913.16" y="704.70" font-size="25.94" textLength="49.58" lengthAdjust="spacingAndGlyphs" fill="#a4a4a4">Fx 2</text>
<text x="884.02" y="744.50" font-size="25.80" textLength="15.24" lengthAdjust="spacingAndGlyphs" fill="#fff">S</text>
<text x="913.16" y="744.30" font-size="25.94" textLength="49.58" lengthAdjust="spacingAndGlyphs" fill="#a4a4a4">Fx 3</text>
<text x="884.02" y="784.10" font-size="25.80" textLength="15.24" lengthAdjust="spacingAndGlyphs" fill="#fff">S</text>
<text x="913.16" y="783.90" font-size="25.94" textLength="49.58" lengthAdjust="spacingAndGlyphs" fill="#a4a4a4">Fx 4</text>
<text x="1102.61" y="257.90" font-size="23.91" textLength="63.43" lengthAdjust="spacingAndGlyphs" fill="#ece4e4">MUTE</text>
<text x="1079.96" y="304.85" font-size="23.55" textLength="27.75" lengthAdjust="spacingAndGlyphs" fill="#fff">LR</text>
<text x="1161.51" y="304.85" font-size="23.55" textLength="20.73" lengthAdjust="spacingAndGlyphs" fill="#fff">M</text>
<text x="1079.64" y="379.80" font-size="18.26" textLength="20.11" lengthAdjust="spacingAndGlyphs" fill="#a0a0a0">10</text>
<text x="1080.28" y="423.40" font-size="18.26" textLength="10.05" lengthAdjust="spacingAndGlyphs" fill="#a0a0a0">5</text>
<text x="1080.37" y="467.40" font-size="18.26" textLength="10.05" lengthAdjust="spacingAndGlyphs" fill="#a0a0a0">0</text>
<text x="1080.28" y="510.90" font-size="18.26" textLength="10.05" lengthAdjust="spacingAndGlyphs" fill="#a0a0a0">5</text>
<text x="1079.64" y="554.90" font-size="18.26" textLength="20.11" lengthAdjust="spacingAndGlyphs" fill="#a0a0a0">10</text>
<text x="1080.10" y="598.20" font-size="18.26" textLength="20.11" lengthAdjust="spacingAndGlyphs" fill="#a0a0a0">20</text>
<text x="1080.37" y="641.70" font-size="18.26" textLength="20.11" lengthAdjust="spacingAndGlyphs" fill="#a0a0a0">30</text>
<text x="1080.28" y="685.40" font-size="18.26" textLength="20.11" lengthAdjust="spacingAndGlyphs" fill="#a0a0a0">50</text>
<text x="1096.87" y="793.05" font-size="22.97" textLength="58.17" lengthAdjust="spacingAndGlyphs" fill="#fff">CH 05</text></svg></div>
<svg width="1280" height="800" viewBox="0 0 1280 800"><path fill="#a0a0a0" d="M12.4,53.4 L16.8,53.4 L10.8,64 L16.8,74.6 L12.4,74.6 L6.6,64 Z"/><g fill="none" stroke="#a8a8a8"><path d="M1012.5,17 L1033,17" stroke-width="2"/><path d="M1018.2,7.3 L1024.8,17 L1018.2,26.7" stroke-width="2.4"/><path d="M1012.6,13.3 L1014.6,17 L1012.6,20.7" stroke-width="1.9"/></g><path d="M1047.73,13.69 A16.7,16.7 0 0 1 1070.07,13.69" fill="none" stroke="#a8a8a8" stroke-width="2.7"/><path d="M1051.07,17.41 A11.7,11.7 0 0 1 1066.73,17.41" fill="none" stroke="#a8a8a8" stroke-width="2.7"/><path d="M1054.55,21.27 A6.5,6.5 0 0 1 1063.25,21.27" fill="none" stroke="#a8a8a8" stroke-width="2.7"/><path fill="#a8a8a8" d="M1057,22.8 L1060.9,22.8 L1059,26 Z"/><rect x="1141.05" y="9.88" width="25.8" height="14.1" fill="none" stroke="#a8a8a8" stroke-width="1.95"/><rect x="1167.8" y="12" width="2.2" height="9.9" fill="#a8a8a8"/><rect x="1144" y="12.9" width="20.1" height="8.2" fill="#a8a8a8"/><path fill="#000" d="M1152.74,12.3 L1147.87,17.65 L1152.74,17.65 L1152.25,21.6 L1155.18,21.6 L1160.22,16.19 L1155.18,16.19 L1155.83,12.3 Z"/><path fill="#d2d2d2" d="M886,48.5 H899.75 L902.5,54.1 H923.75 V79.1 H886 Z"/><path fill="none" stroke="#1b1b1b" stroke-width="1.3" d="M888.6,68.2 L891.8,57.4 L924.5,57.4"/><path fill="#d2d2d2" d="M892.4,58.3 H929.75 L923.75,79.1 H888 V70 Z"/><g fill="none" stroke="#d2d2d2" stroke-width="4"><path d="M1009,63.7 L978,63.7"/><path d="M991.5,49 L977.5,63.7 L991.5,78.5"/><path d="M1143,63.7 L1174,63.7"/><path d="M1160.5,49 L1174.5,63.7 L1160.5,78.5"/></g><rect x="1062.20" y="45.80" width="7.3" height="7" fill="#d2d2d2"/><rect x="1072.25" y="45.80" width="7.3" height="7" fill="#d2d2d2"/><rect x="1082.30" y="45.80" width="7.3" height="7" fill="#d2d2d2"/><rect x="1062.20" y="55.60" width="7.3" height="7" fill="#d2d2d2"/><rect x="1072.25" y="55.60" width="7.3" height="7" fill="#d2d2d2"/><rect x="1082.30" y="55.60" width="7.3" height="7" fill="#d2d2d2"/><rect x="1062.20" y="65.40" width="7.3" height="7" fill="#d2d2d2"/><rect x="1072.25" y="65.40" width="7.3" height="7" fill="#d2d2d2"/><rect x="1082.30" y="65.40" width="7.3" height="7" fill="#d2d2d2"/><rect x="1072.25" y="75.2" width="7.3" height="7" fill="#d2d2d2"/><rect x="22.8" y="43.6" width="40.4" height="40.6" rx="1.5" fill="#2a2830" stroke="#1898b0" stroke-width="1.4"/><line x1="32.2" y1="53" x2="32.2" y2="63" stroke="#c8a020" stroke-width="1" stroke-dasharray="1 1"/><line x1="32.2" y1="63" x2="32.2" y2="82" stroke="#70c020" stroke-width="1" stroke-dasharray="1 1"/><line x1="45.6" y1="53" x2="45.6" y2="63" stroke="#c8a020" stroke-width="1" stroke-dasharray="1 1"/><line x1="45.6" y1="63" x2="45.6" y2="82" stroke="#70c020" stroke-width="1" stroke-dasharray="1 1"/><line x1="59.2" y1="53" x2="59.2" y2="63" stroke="#c8a020" stroke-width="1" stroke-dasharray="1 1"/><line x1="59.2" y1="63" x2="59.2" y2="82" stroke="#70c020" stroke-width="1" stroke-dasharray="1 1"/><line x1="28.5" y1="53" x2="28.5" y2="77" stroke="#111" stroke-width="1.6"/><line x1="41.2" y1="53" x2="41.2" y2="77" stroke="#111" stroke-width="1.6"/><line x1="54.8" y1="53" x2="54.8" y2="77" stroke="#111" stroke-width="1.6"/><rect x="27" y="46.8" width="36.5" height="6.2" rx="3" fill="#1a90a8"/><text x="44.5" y="52.2" font-size="5.5" fill="#bfe6ee" text-anchor="middle" font-family="Liberation Sans">Mixing Station</text><path d="M22.5,58.2 L39,58.2 A3.9,3.9 0 0 1 39,66 L22.5,66 Z" fill="#1a90a8"/><text x="31" y="65" font-size="8" fill="#e6f6fa" text-anchor="middle" font-family="Liberation Sans">X32</text><rect x="39" y="67" width="4.3" height="5.8" fill="#e0e0e0"/><rect x="53" y="64" width="3.6" height="6.2" fill="#e0e0e0"/><circle cx="1238.5" cy="349" r="11" fill="none" stroke="#a8a8a8" stroke-width="4.4"/><line x1="1246.5" y1="357.5" x2="1254.5" y2="365.5" stroke="#a8a8a8" stroke-width="4.4" stroke-linecap="round"/><path fill="#a8a8a8" d="M1225,448 L1239,435.3 L1240,436 L1240,442.4 L1255,442.4 Q1257,442.4 1257,444.4 L1257,451.6 Q1257,453.6 1255,453.6 L1240,453.6 L1240,460 L1239,460.7 Z"/><path fill="none" stroke="#a8a8a8" stroke-width="4" stroke-linecap="round" d="M1226.5,749.5 L1241,735 L1255.5,749.5"/><path fill="#a8a8a8" d="M1230,751.5 L1241,740.5 L1252,751.5 L1252,762 L1244,762 L1244,753 L1238,753 L1238,762 L1230,762 Z"/></svg>
<div style="position:absolute;left:1102.75px;top:683.75px;width:43.5px;height:85.65px;box-shadow:0 0 3px 2px rgba(10,10,14,.8);
background:linear-gradient(to bottom,#8a8a8a 0px,#d8d8d8 2px,#f0f0f0 5px,#e4e4e4 10px,#b8b8b8 13px,#b2b2b2 38px,#8a8a8a 39.5px,#f2f2f2 41.5px,#e6e6e6 50px,#f0f0f0 68px,#cfcfcf 71px,#6a6a6a 73px,#4a4a4a 84px,#1e1e1e 85.65px);"></div>
<div style="position:absolute;left:1102.75px;top:683.75px;width:43.5px;height:85.65px;background:linear-gradient(to right,rgba(0,0,0,.45) 0px,rgba(0,0,0,0) 4px,rgba(0,0,0,0) 39.5px,rgba(0,0,0,.45) 43.5px);"></div>
</body></html>
